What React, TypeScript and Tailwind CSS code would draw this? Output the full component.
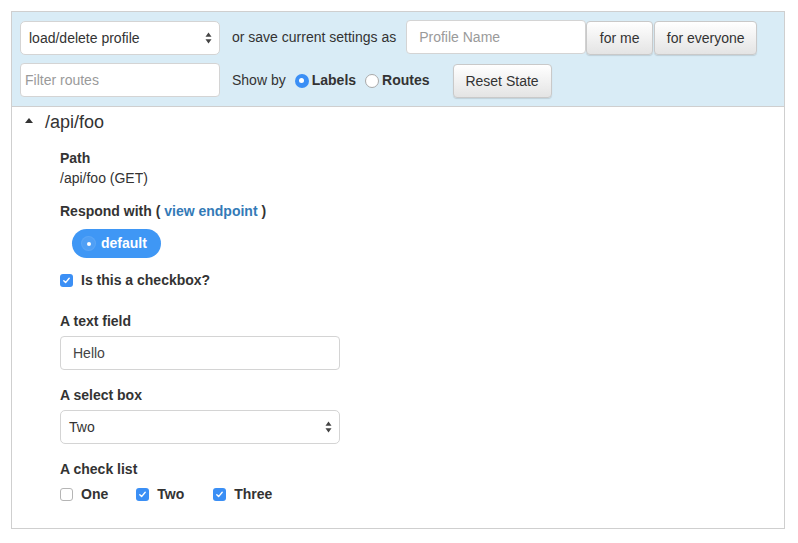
const FONT = "font-['Helvetica_Neue','Liberation_Sans',Arial,sans-serif]";

function Arrows() {
  return (
    <svg width="7" height="12" viewBox="0 0 7 12" className="shrink-0">
      <path d="M3.5 0.5 L6.5 4.8 L0.5 4.8 Z" fill="#444" />
      <path d="M3.5 11.5 L6.5 7.2 L0.5 7.2 Z" fill="#444" />
    </svg>
  );
}

function FakeSelect({ value, className }: { value: string; className?: string }) {
  return (
    <div
      className={
        "flex h-[34px] shrink-0 items-center justify-between rounded-[5px] border border-[#d4d4d4] bg-white pl-2 pr-[7px] text-[14px] text-[#333] " +
        (className ?? "")
      }
    >
      <span>{value}</span>
      <Arrows />
    </div>
  );
}

function Box({ checked }: { checked: boolean }) {
  if (!checked)
    return <span className="inline-block h-[13px] w-[13px] shrink-0 rounded-[3px] border border-[#b5b5b5] bg-white" />;
  return (
    <span className="flex h-[13px] w-[13px] shrink-0 items-center justify-center rounded-[3px] bg-[#3b8ff5]">
      <svg width="9" height="9" viewBox="0 0 9 9">
        <path d="M1.8 4.8 L3.6 6.6 L7.2 2.3" fill="none" stroke="white" strokeWidth="1.4" strokeLinecap="round" strokeLinejoin="round" />
      </svg>
    </span>
  );
}

function Radio({ checked }: { checked: boolean }) {
  if (checked)
    return (
      <span className="flex h-[14px] w-[14px] items-center justify-center rounded-full bg-[#3b8ff5]">
        <span className="h-[5px] w-[5px] rounded-full bg-white" />
      </span>
    );
  return <span className="inline-block h-[14px] w-[14px] rounded-full border border-[#a9a9a9] bg-white" />;
}

const btn =
  "flex h-[34px] shrink-0 items-center justify-center whitespace-nowrap rounded-[4px] border border-[#c9c9c9] bg-gradient-to-b from-white to-[#e4e4e4] text-[14px] text-[#333] shadow-[0_1px_1px_rgba(0,0,0,0.12)]";

function Label({ children, className }: { children: React.ReactNode; className?: string }) {
  return <div className={"text-[14px] font-bold leading-5 text-[#333] " + (className ?? "")}>{children}</div>;
}

export default function App() {
  return (
    <div className={`${FONT} bg-white pl-[11px] pt-[11px] text-[#333]`}>
      <div className="h-[518px] w-[774px] border border-[#cfcfcf]">
        <div className="flex flex-col gap-[8px] border-b border-[#cfcfcf] bg-[#d9ecf6] pb-[8px] pl-2 pt-[8px]">
          <div className="flex h-[35px] items-start">
            <FakeSelect value="load/delete profile" className="mt-px w-[200px]" />
            <span className="ml-[12px] self-center whitespace-nowrap text-[14px]">or save current settings as</span>
            <div className="ml-[10px] flex h-[34px] w-[180px] shrink-0 items-center rounded-[4px] border border-[#d4d4d4] bg-white pl-3 text-[14px] text-[#9a9a9a]">
              Profile Name
            </div>
            <button className={btn + " mt-px w-[67px]"}>for me</button>
            <button className={btn + " mt-px ml-px w-[103px]"}>for everyone</button>
          </div>
          <div className="flex h-[35px] items-start">
            <div className="flex h-[34px] w-[200px] shrink-0 items-center rounded-[4px] border border-[#d4d4d4] bg-white pl-[4px] text-[14px] text-[#9a9a9a]">
              Filter routes
            </div>
            <span className="ml-[12px] self-center text-[14px]">Show by</span>
            <span className="ml-[9px] flex items-center gap-[3px] self-center">
              <Radio checked />
              <span className="text-[14px] font-bold">Labels</span>
            </span>
            <span className="ml-[9px] flex items-center gap-[3px] self-center">
              <Radio checked={false} />
              <span className="text-[14px] font-bold">Routes</span>
            </span>
            <button className={btn + " mt-px ml-[23px] w-[99px]"}>Reset State</button>
          </div>
        </div>

        <div>
          <div className="flex h-[30px] items-center">
            <svg width="8" height="5" viewBox="0 0 8 5" className="ml-[13px] mb-[3px]">
              <path d="M4 0 L8 5 L0 5 Z" fill="#333" />
            </svg>
            <span className="ml-[12px] text-[18px] text-[#333]">/api/foo</span>
          </div>

          <div className="pl-[48px]">
            <Label className="mt-[11px]">Path</Label>
            <div className="text-[14px] leading-5">/api/foo (GET)</div>
            <Label className="mt-[13px]">
              Respond with ( <span className="text-[#337ab7]">view endpoint</span> )
            </Label>
            <div className="ml-[12px] mt-[8px] flex h-[29px] w-[89px] items-center rounded-full bg-[#3f97f5] pl-[10px]">
              <span className="flex h-[13px] w-[13px] items-center justify-center rounded-full bg-[#4f9ff5] shadow-[0_0_0_1px_rgba(255,255,255,0.15)]">
                <span className="h-[4px] w-[4px] rounded-full bg-white" />
              </span>
              <span className="ml-[6px] text-[14px] font-bold text-white">default</span>
            </div>
            <div className="mt-[12px] flex h-5 items-center">
              <Box checked />
              <span className="ml-[8px] text-[14px] font-bold">Is this a checkbox?</span>
            </div>

            <Label className="mt-[21px]">A text field</Label>
            <div className="mt-[5px] flex h-[34px] w-[280px] items-center rounded-[4px] border border-[#d4d4d4] bg-white pl-3 text-[14px] text-[#444]">
              Hello
            </div>

            <Label className="mt-[15px]">A select box</Label>
            <FakeSelect value="Two" className="mt-[5px] w-[280px]" />

            <Label className="mt-[15px]">A check list</Label>
            <div className="mt-[5px] flex h-5 items-center">
              <Box checked={false} />
              <span className="ml-[8px] text-[14px] font-bold">One</span>
              <span className="ml-[28px]">
                <Box checked />
              </span>
              <span className="ml-[8px] text-[14px] font-bold">Two</span>
              <span className="ml-[29px]">
                <Box checked />
              </span>
              <span className="ml-[8px] text-[14px] font-bold">Three</span>
            </div>
          </div>
        </div>
      </div>
      <div className="h-[14px]" />
    </div>
  );
}
